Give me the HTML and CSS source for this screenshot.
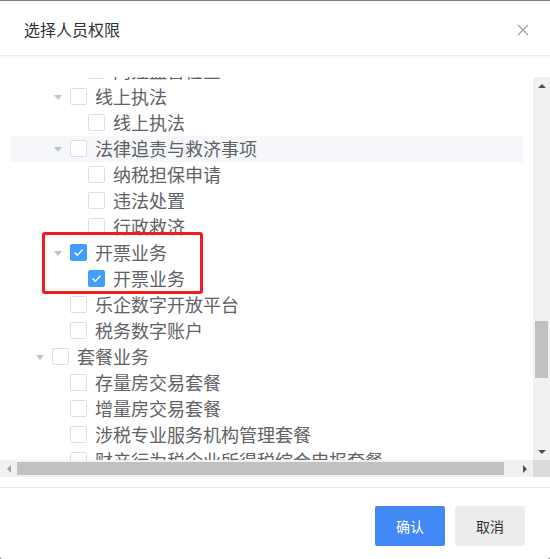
FILE: index.html
```html
<!DOCTYPE html>
<html lang="zh-CN">
<head>
    <meta charset="UTF-8">
    <meta name="viewport" content="width=device-width, initial-scale=1.0">
    <title>选择人员权限</title>
    <link rel="stylesheet" href="styles.css">
</head>
<body>
    <div class="dialog">
        <div class="dialog-header">
            <span class="dialog-title">选择人员权限</span>
            <svg class="dialog-close" width="12" height="12" viewBox="0 0 12 12">
                <path d="M1 1 L11 11 M11 1 L1 11" stroke="#a0a3a8" stroke-width="1.3" fill="none"/>
            </svg>
        </div>

        <div class="dialog-body">
            <div class="scroll-box">
                <div class="tree-view">
                    <div class="tree">
                        <div class="tree-node level-4"><span class="caret is-leaf"></span><span class="checkbox"></span><span class="label">内控监督检查</span></div>
                        <div class="tree-node level-3"><span class="caret"></span><span class="checkbox"></span><span class="label">线上执法</span></div>
                        <div class="tree-node level-4"><span class="caret is-leaf"></span><span class="checkbox"></span><span class="label">线上执法</span></div>
                        <div class="tree-node level-3 is-hover"><span class="caret"></span><span class="checkbox"></span><span class="label">法律追责与救济事项</span></div>
                        <div class="tree-node level-4"><span class="caret is-leaf"></span><span class="checkbox"></span><span class="label">纳税担保申请</span></div>
                        <div class="tree-node level-4"><span class="caret is-leaf"></span><span class="checkbox"></span><span class="label">违法处置</span></div>
                        <div class="tree-node level-4"><span class="caret is-leaf"></span><span class="checkbox"></span><span class="label">行政救济</span></div>
                        <div class="tree-node level-3"><span class="caret"></span><span class="checkbox is-checked"><svg width="17" height="17" viewBox="0 0 17 17"><path d="M4.5 8.5 L7.3 11.2 L12.5 5.8" stroke="#fff" stroke-width="1.4" fill="none"/></svg></span><span class="label">开票业务</span></div>
                        <div class="tree-node level-4"><span class="caret is-leaf"></span><span class="checkbox is-checked"><svg width="17" height="17" viewBox="0 0 17 17"><path d="M4.5 8.5 L7.3 11.2 L12.5 5.8" stroke="#fff" stroke-width="1.4" fill="none"/></svg></span><span class="label">开票业务</span></div>
                        <div class="tree-node level-3"><span class="caret is-leaf"></span><span class="checkbox"></span><span class="label">乐企数字开放平台</span></div>
                        <div class="tree-node level-3"><span class="caret is-leaf"></span><span class="checkbox"></span><span class="label">税务数字账户</span></div>
                        <div class="tree-node level-2"><span class="caret"></span><span class="checkbox"></span><span class="label">套餐业务</span></div>
                        <div class="tree-node level-3"><span class="caret is-leaf"></span><span class="checkbox"></span><span class="label">存量房交易套餐</span></div>
                        <div class="tree-node level-3"><span class="caret is-leaf"></span><span class="checkbox"></span><span class="label">增量房交易套餐</span></div>
                        <div class="tree-node level-3"><span class="caret is-leaf"></span><span class="checkbox"></span><span class="label">涉税专业服务机构管理套餐</span></div>
                        <div class="tree-node level-3"><span class="caret is-leaf"></span><span class="checkbox"></span><span class="label">财产行为税企业所得税综合申报套餐</span></div>
                    </div>
                </div>

                <!-- fake classic scrollbars -->
                <div class="vbar">
                    <div class="bar-btn"><span class="arrow-up"></span></div>
                    <div class="vbar-track"><div class="vbar-thumb"></div></div>
                    <div class="bar-btn"><span class="arrow-down"></span></div>
                </div>
                <div class="hbar">
                    <div class="bar-btn"><span class="arrow-left"></span></div>
                    <div class="hbar-track"><div class="hbar-thumb"></div></div>
                    <div class="bar-btn"><span class="arrow-right"></span></div>
                </div>
                <div class="bar-corner"></div>
            </div>
        </div>

        <div class="dialog-footer">
            <button class="btn btn-primary">确认</button>
            <button class="btn btn-default">取消</button>
        </div>

        <div class="mark-box"></div>
    </div>
</body>
</html>
```

FILE: styles.css
```css
body {
    margin: 0;
    background: #7f7f7f;
    font-family: "Noto Sans CJK SC", "Noto Sans", sans-serif;
}

.dialog {
    position: relative;
    width: 550px;
    height: 558px;
    margin-top: 1px;
    background: #fff;
    border-radius: 0 0 3px 3px;
    display: flex;
    flex-direction: column;
    overflow: hidden;
}

.dialog-header {
    height: 54px;
    padding: 0 24px;
    display: flex;
    align-items: center;
    justify-content: space-between;
    border-bottom: 1px solid #ebebeb;
    box-shadow: 0 1px 2px rgba(0, 0, 0, 0.04);
    flex-shrink: 0;
}

.dialog-title {
    font-size: 16px;
    color: #303133;
    line-height: 1;
    margin-top: 1px;
}

.dialog-close {
    display: block;
    margin-top: 3px;
    margin-right: -3px;
}

.dialog-body {
    padding: 21px 0 10px;
    flex-shrink: 0;
}

.scroll-box {
    display: grid;
    grid-template-columns: 533px 17px;
    grid-template-rows: 383px 17px;
}

.tree-view {
    padding: 0 10px;
    overflow: hidden;
}

.tree {
    margin-top: -19px;
}

.tree-node {
    height: 26px;
    display: flex;
    align-items: center;
    white-space: nowrap;
    font-size: 18px;
    color: #606266;
}

.tree-node.is-hover {
    background: #f5f7fa;
}

.level-2 { padding-left: 18px; }
.level-3 { padding-left: 36px; }
.level-4 { padding-left: 54px; }

.caret {
    width: 24px;
    height: 26px;
    flex-shrink: 0;
    display: flex;
    align-items: center;
    justify-content: center;
}

.caret::before {
    content: "";
    border-left: 4px solid transparent;
    border-right: 4px solid transparent;
    border-top: 5px solid #c0c4cc;
}

.caret.is-leaf::before {
    display: none;
}

.checkbox {
    width: 17px;
    height: 17px;
    box-sizing: border-box;
    border: 1px solid #dcdfe6;
    border-radius: 2px;
    background: #fff;
    margin-right: 8px;
    margin-top: -2px;
    flex-shrink: 0;
    position: relative;
}

.checkbox.is-checked {
    background: #409eff;
    border-color: #409eff;
}

.checkbox svg {
    position: absolute;
    left: -1px;
    top: -1px;
}

.label {
    line-height: 24px;
    margin-bottom: 2px;
}

/* scrollbars */
.vbar {
    display: flex;
    flex-direction: column;
    background: #f1f1f1;
}

.vbar-track {
    flex: 1;
}

.vbar-thumb {
    margin: 227px 2px 0;
    height: 57px;
    background: #c1c1c1;
}

.hbar {
    display: flex;
    background: #f1f1f1;
}

.hbar-track {
    flex: 1;
}

.hbar-thumb {
    margin: 2px 0;
    width: 487px;
    height: 13px;
    background: #c1c1c1;
}

.bar-btn {
    width: 17px;
    height: 17px;
    flex-shrink: 0;
    display: flex;
    align-items: center;
    justify-content: center;
}

.arrow-up {
    border-left: 4px solid transparent;
    border-right: 4px solid transparent;
    border-bottom: 4px solid #505050;
}

.arrow-down {
    border-left: 4px solid transparent;
    border-right: 4px solid transparent;
    border-top: 4px solid #505050;
}

.arrow-left {
    border-top: 4px solid transparent;
    border-bottom: 4px solid transparent;
    border-right: 4px solid #a3a3a3;
}

.arrow-right {
    border-top: 4px solid transparent;
    border-bottom: 4px solid transparent;
    border-left: 4px solid #505050;
}

.bar-corner {
    background: #dcdcdc;
}

.dialog-footer {
    border-top: 1px solid #e8e8e8;
    padding: 18px 25px 0;
    display: flex;
    justify-content: flex-end;
    gap: 10px;
}

.btn {
    width: 70px;
    height: 40px;
    border: none;
    border-radius: 2px;
    font-family: inherit;
    font-size: 14px;
}

.btn-primary {
    background: #4289f5;
    color: #fff;
}

.btn-default {
    background: #ececec;
    color: #333;
}

/* red annotation frame */
.mark-box {
    position: absolute;
    left: 42px;
    top: 231px;
    width: 155px;
    height: 56px;
    border: 3px solid #f21c1c;
    border-radius: 3px;
}
```
